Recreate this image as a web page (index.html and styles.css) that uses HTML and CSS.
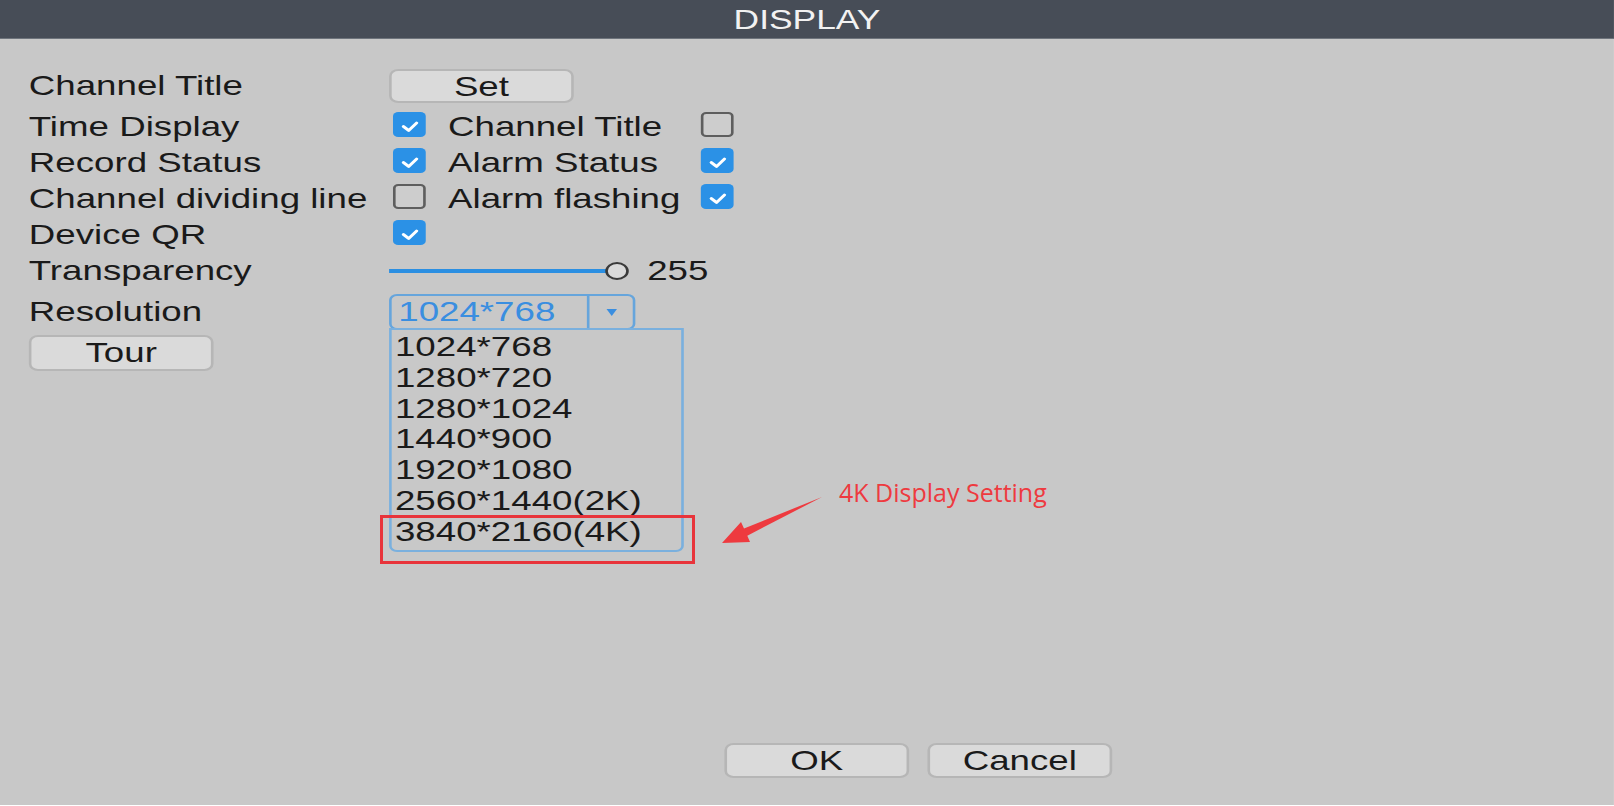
FILE: index.html
```html
<!DOCTYPE html>
<html lang="en">
<head>
    <meta charset="UTF-8">
    <title>DISPLAY</title>
    <link rel="stylesheet" href="styles.css">
</head>
<body>
    <div class="screen">
        <div class="dialog">
            <div class="title-bar">DISPLAY</div>

            <div class="form">
                <div class="row row-first">
                    <span class="label">Channel Title</span>
                    <button class="button btn-set">Set</button>
                </div>
                <div class="row row-check">
                    <span class="label">Time Display</span>
                    <span class="check on"><svg viewBox="0 0 25 25"><polyline points="8,14.5 12,18.5 18,11"/></svg></span>
                    <span class="label sub">Channel Title</span>
                    <span class="check"></span>
                </div>
                <div class="row row-check">
                    <span class="label">Record Status</span>
                    <span class="check on"><svg viewBox="0 0 25 25"><polyline points="8,14.5 12,18.5 18,11"/></svg></span>
                    <span class="label sub">Alarm Status</span>
                    <span class="check on"><svg viewBox="0 0 25 25"><polyline points="8,14.5 12,18.5 18,11"/></svg></span>
                </div>
                <div class="row row-check">
                    <span class="label">Channel dividing line</span>
                    <span class="check"></span>
                    <span class="label sub">Alarm flashing</span>
                    <span class="check on"><svg viewBox="0 0 25 25"><polyline points="8,14.5 12,18.5 18,11"/></svg></span>
                </div>
                <div class="row row-check">
                    <span class="label">Device QR</span>
                    <span class="check on"><svg viewBox="0 0 25 25"><polyline points="8,14.5 12,18.5 18,11"/></svg></span>
                </div>
                <div class="row row-check">
                    <span class="label">Transparency</span>
                    <div class="slider">
                        <div class="track"></div>
                        <div class="knob"></div>
                    </div>
                    <span class="value">255</span>
                </div>
                <div class="row row-res">
                    <span class="label">Resolution</span>
                    <div class="combo">
                        <span class="combo-text">1024*768</span>
                        <span class="combo-arrow"></span>
                    </div>
                    <!-- 展开的下拉列表 -->
                    <div class="dropdown">
                        <div class="item">1024*768</div>
                        <div class="item">1280*720</div>
                        <div class="item">1280*1024</div>
                        <div class="item">1440*900</div>
                        <div class="item">1920*1080</div>
                        <div class="item">2560*1440(2K)</div>
                        <div class="item">3840*2160(4K)</div>
                    </div>
                </div>
                <div class="row row-tour">
                    <button class="button btn-tour">Tour</button>
                </div>
            </div>

            <div class="footer">
                <button class="button btn-footer">OK</button>
                <button class="button btn-footer">Cancel</button>
            </div>
        </div>

        <!-- 标注 -->
        <div class="note-box"></div>
        <div class="note-text">4K Display Setting</div>
        <svg class="note-arrow" viewBox="0 0 140 80" width="140" height="80">
            <polygon points="22,63 41,42 44,48.5 122,17 47.3,55.7 50,62"/>
        </svg>
    </div>
</body>
</html>
```

FILE: styles.css
```css
body, html {
    margin: 0;
    padding: 0;
    width: 100%;
    height: 100%;
    overflow: hidden;
    background-color: #ffffff;
}

.screen {
    position: relative;
    width: 1614px;
    height: 806px;
}

/* 原界面被横向拉伸，整体按比例放大 */
.dialog {
    width: 1232.1px;
    height: 805px;
    display: flex;
    flex-direction: column;
    background-color: #c8c8c8;
    transform: scaleX(1.31);
    transform-origin: 0 0;
    font-family: "Liberation Sans", Arial, sans-serif;
    font-size: 28px;
    color: #1a1a1a;
}

.title-bar {
    height: 35px;
    padding-top: 3px;
    line-height: 35px;
    text-align: center;
    font-size: 27px;
    color: #f2f2f2;
    background-color: #474d57;
    border-bottom: 1px solid #6e747c;
}

.form {
    display: flex;
    flex-direction: column;
    padding: 29px 0 0 22px;
}

.row {
    display: flex;
    align-items: center;
    height: 36px;
}

.row-first {
    margin-bottom: 2px;
}

.row-check .label,
.row-check .value {
    padding-top: 5px;
}

.row-res {
    position: relative;
    margin-top: 8px;
}

.row-tour {
    margin-top: 5px;
}

.label {
    width: 275px;
    white-space: nowrap;
}

.label.sub {
    width: 193px;
}

.check {
    box-sizing: border-box;
    width: 25px;
    height: 25px;
    margin-left: 3px;
    margin-right: 17px;
    border: 2px solid #5e5e5e;
    border-radius: 4px;
    background-color: #cdcdcd;
}

.label.sub + .check {
    margin-left: 0;
    margin-right: 0;
}

.check.on {
    border: none;
    background-color: #2b91e6;
}

.check svg {
    display: block;
    width: 25px;
    height: 25px;
}

.check polyline {
    fill: none;
    stroke: #ffffff;
    stroke-width: 2.6;
    stroke-linecap: round;
    stroke-linejoin: round;
}

.button {
    box-sizing: border-box;
    width: 141px;
    padding: 0;
    font-family: inherit;
    font-size: 28px;
    color: #1a1a1a;
    background-color: #dadada;
    border: 2px solid #b6b6b6;
    border-radius: 7px;
}

.btn-set {
    height: 34px;
}

.btn-tour {
    height: 36px;
}

/* 透明度滑块 */
.slider {
    display: flex;
    align-items: center;
    margin-top: 5px;
}

.track {
    width: 166px;
    height: 4px;
    background-color: #2b8fe2;
}

.knob {
    box-sizing: border-box;
    width: 18px;
    height: 18px;
    margin-left: -1px;
    border: 2px solid #3a3a3a;
    border-radius: 50%;
    background-color: #dadada;
}

.value {
    margin-left: 14px;
}

/* 分辨率下拉框 */
.combo {
    box-sizing: border-box;
    display: flex;
    width: 188px;
    height: 36px;
    border: 2px solid #66a5dc;
    border-radius: 6px;
}

.combo-text {
    flex-grow: 1;
    padding-left: 5px;
    line-height: 32px;
    color: #3a8ee0;
}

.combo-arrow {
    width: 33px;
    display: flex;
    align-items: center;
    justify-content: center;
    border-left: 2px solid #66a5dc;
}

.combo-arrow::after {
    content: "";
    border-left: 4px solid transparent;
    border-right: 4px solid transparent;
    border-top: 7px solid #3a8ee0;
}

.dropdown {
    position: absolute;
    left: 275px;
    top: 34px;
    box-sizing: border-box;
    width: 225px;
    height: 224px;
    padding: 2px 0 0 2.5px;
    border: 2px solid #7ab0de;
    border-radius: 0 0 6px 6px;
}

.item {
    height: 30.8px;
    line-height: 30.8px;
    white-space: nowrap;
}

.footer {
    display: flex;
    gap: 14px;
    margin-top: auto;
    padding: 0 0 27px 553px;
}

.btn-footer {
    height: 35px;
}

/* 红色标注 */
.note-box {
    position: absolute;
    left: 380px;
    top: 515px;
    box-sizing: border-box;
    width: 315px;
    height: 49px;
    border: 3px solid #e8343b;
}

.note-text {
    position: absolute;
    left: 839px;
    top: 475px;
    font-family: "Open Sans", "Noto Sans", sans-serif;
    font-size: 25px;
    color: #ee3a3f;
    white-space: nowrap;
}

.note-arrow {
    position: absolute;
    left: 700px;
    top: 480px;
}

.note-arrow polygon {
    fill: #ee3a3f;
}
```
